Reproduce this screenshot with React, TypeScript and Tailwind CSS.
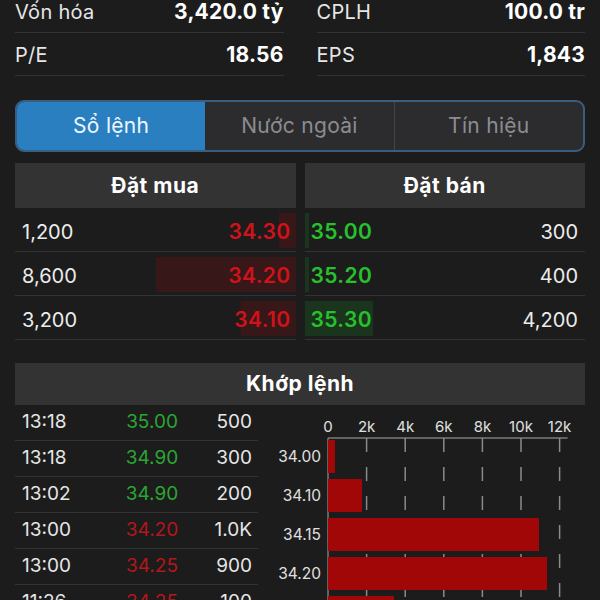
import React from "react";

const stats = [
  { label: "Vốn hóa", value: "3,420.0 tỷ" },
  { label: "CPLH", value: "100.0 tr" },
  { label: "P/E", value: "18.56" },
  { label: "EPS", value: "1,843" },
];

const buys = [
  { qty: "1,200", price: "34.30", w: 17 },
  { qty: "8,600", price: "34.20", w: 140 },
  { qty: "3,200", price: "34.10", w: 55 },
];
const sells = [
  { qty: "300", price: "35.00", w: 4 },
  { qty: "400", price: "35.20", w: 4 },
  { qty: "4,200", price: "35.30", w: 68 },
];

const trades = [
  { t: "13:18", p: "35.00", v: "500", up: true },
  { t: "13:18", p: "34.90", v: "300", up: true },
  { t: "13:02", p: "34.90", v: "200", up: true },
  { t: "13:00", p: "34.20", v: "1.0K", up: false },
  { t: "13:00", p: "34.25", v: "900", up: false },
  { t: "11:26", p: "34.25", v: "100", up: false },
];

const bars = [
  { label: "34.00", w: 7 },
  { label: "34.10", w: 34 },
  { label: "34.15", w: 211 },
  { label: "34.20", w: 219 },
  { label: "34.25", w: 66 },
];

function Chart() {
  const x0 = 58;
  const step = 38.6;
  const ticks = ["0", "2k", "4k", "6k", "8k", "10k", "12k"];
  return (
    <svg width="330" height="195" className="block">
      {ticks.map((t, i) => (
        <text
          key={t}
          x={x0 + step * i}
          y={27}
          fill="#e0e0e0"
          fontSize="15"
          textAnchor="middle"
          fontFamily="Inter, sans-serif"
        >
          {t}
        </text>
      ))}
      <line x1={x0} y1={33} x2={x0 + step * 6 + 8} y2={33} stroke="#7a7a7a" strokeWidth="1.5" />
      <line x1={x0} y1={33} x2={x0} y2={195} stroke="#7a7a7a" strokeWidth="1.5" />
      {ticks.slice(1).map((t, i) => (
        <line
          key={t}
          x1={x0 + step * (i + 1)}
          y1={33}
          x2={x0 + step * (i + 1)}
          y2={195}
          stroke="#8a8a8a"
          strokeWidth="1.5"
          strokeDasharray="14 15"
        />
      ))}
      {bars.map((b, i) => (
        <g key={b.label}>
          <rect x={x0} y={35 + 39 * i} width={b.w} height={33} fill="#a10707" />
          <text
            x={51}
            y={35 + 39 * i + 22}
            fill="#e0e0e0"
            fontSize="15.5"
            textAnchor="end"
            fontFamily="Inter, sans-serif"
          >
            {b.label}
          </text>
        </g>
      ))}
    </svg>
  );
}

export default function App() {
  return (
    <div className="w-[600px] h-[600px] overflow-hidden bg-[#1c1c1c] px-[15px] text-white font-['Inter',sans-serif]">
      <div className="-mt-[10px] grid grid-cols-2 gap-x-[33px]">
        {stats.map((s) => (
          <div
            key={s.label}
            className="h-[43px] flex items-center justify-between border-b border-[#333333] pt-[2px]"
          >
            <span className="text-[20px] tracking-[0.3px] text-[#e6e6e6]">{s.label}</span>
            <span className="text-[21px] font-bold tracking-[0.2px] text-white">{s.value}</span>
          </div>
        ))}
      </div>

      <div className="mt-[24px] h-[52px] flex rounded-[9px] border-2 border-[#3a5d80] bg-[#2c2c2e] overflow-hidden">
        <div className="flex-1 flex items-center justify-center bg-[#2a7fc1] text-[21px] tracking-[0.3px] text-[#eef7ff]">
          Sổ lệnh
        </div>
        <div className="flex-1 flex items-center justify-center text-[21px] tracking-[0.3px] text-[#8c8c90] border-r border-[#444446]">
          Nước ngoài
        </div>
        <div className="flex-1 flex items-center justify-center text-[21px] tracking-[0.3px] text-[#8c8c90]">
          Tín hiệu
        </div>
      </div>

      <div className="mt-[11px] grid grid-cols-2 gap-x-[9px]">
        <div>
          <div className="h-[45px] flex items-center justify-center bg-[#333333] text-[21px] tracking-[0.5px] font-bold">
            Đặt mua
          </div>
          {buys.map((r) => (
            <div
              key={r.price}
              className="relative h-[44px] flex items-center justify-between border-b border-[#333333] pl-[7px] pr-[5px] pt-[5px]"
            >
              <div
                className="absolute right-0 top-[5px] bottom-[3px] bg-[#371718]"
                style={{ width: r.w }}
              />
              <span className="relative text-[20px] text-[#ececec]">{r.qty}</span>
              <span className="relative text-[21px] font-semibold tracking-[0.4px] text-[#d0121a]">{r.price}</span>
            </div>
          ))}
        </div>
        <div>
          <div className="h-[45px] flex items-center justify-center bg-[#333333] text-[21px] tracking-[0.5px] font-bold">
            Đặt bán
          </div>
          {sells.map((r) => (
            <div
              key={r.price}
              className="relative h-[44px] flex items-center justify-between border-b border-[#333333] pl-[6px] pr-[7px] pt-[5px]"
            >
              <div
                className="absolute left-0 top-[5px] bottom-[3px] bg-[#1b341d]"
                style={{ width: r.w }}
              />
              <span className="relative text-[21px] font-semibold tracking-[0.4px] text-[#27c12c]">{r.price}</span>
              <span className="relative text-[20px] text-[#ececec]">{r.qty}</span>
            </div>
          ))}
        </div>
      </div>

      <div className="mt-[23px] h-[42px] flex items-center justify-center bg-[#333333] text-[21px] tracking-[0.5px] font-bold">
        Khớp lệnh
      </div>
      <div className="flex">
        <div className="w-[243px] shrink-0">
          {trades.map((r, i) => (
            <div
              key={i}
              className="h-[36px] grid grid-cols-[100px_60px_1fr] items-center border-b border-[#333333] pl-[7px] pr-[6px] text-[19px]"
            >
              <span className="text-[#e6e6e6]">{r.t}</span>
              <span className={r.up ? "text-center text-[#2aa632]" : "text-center text-[#b3161b]"}>
                {r.p}
              </span>
              <span className="text-right text-[#e6e6e6]">{r.v}</span>
            </div>
          ))}
        </div>
        <div className="ml-[12px]">
          <Chart />
        </div>
      </div>
    </div>
  );
}
